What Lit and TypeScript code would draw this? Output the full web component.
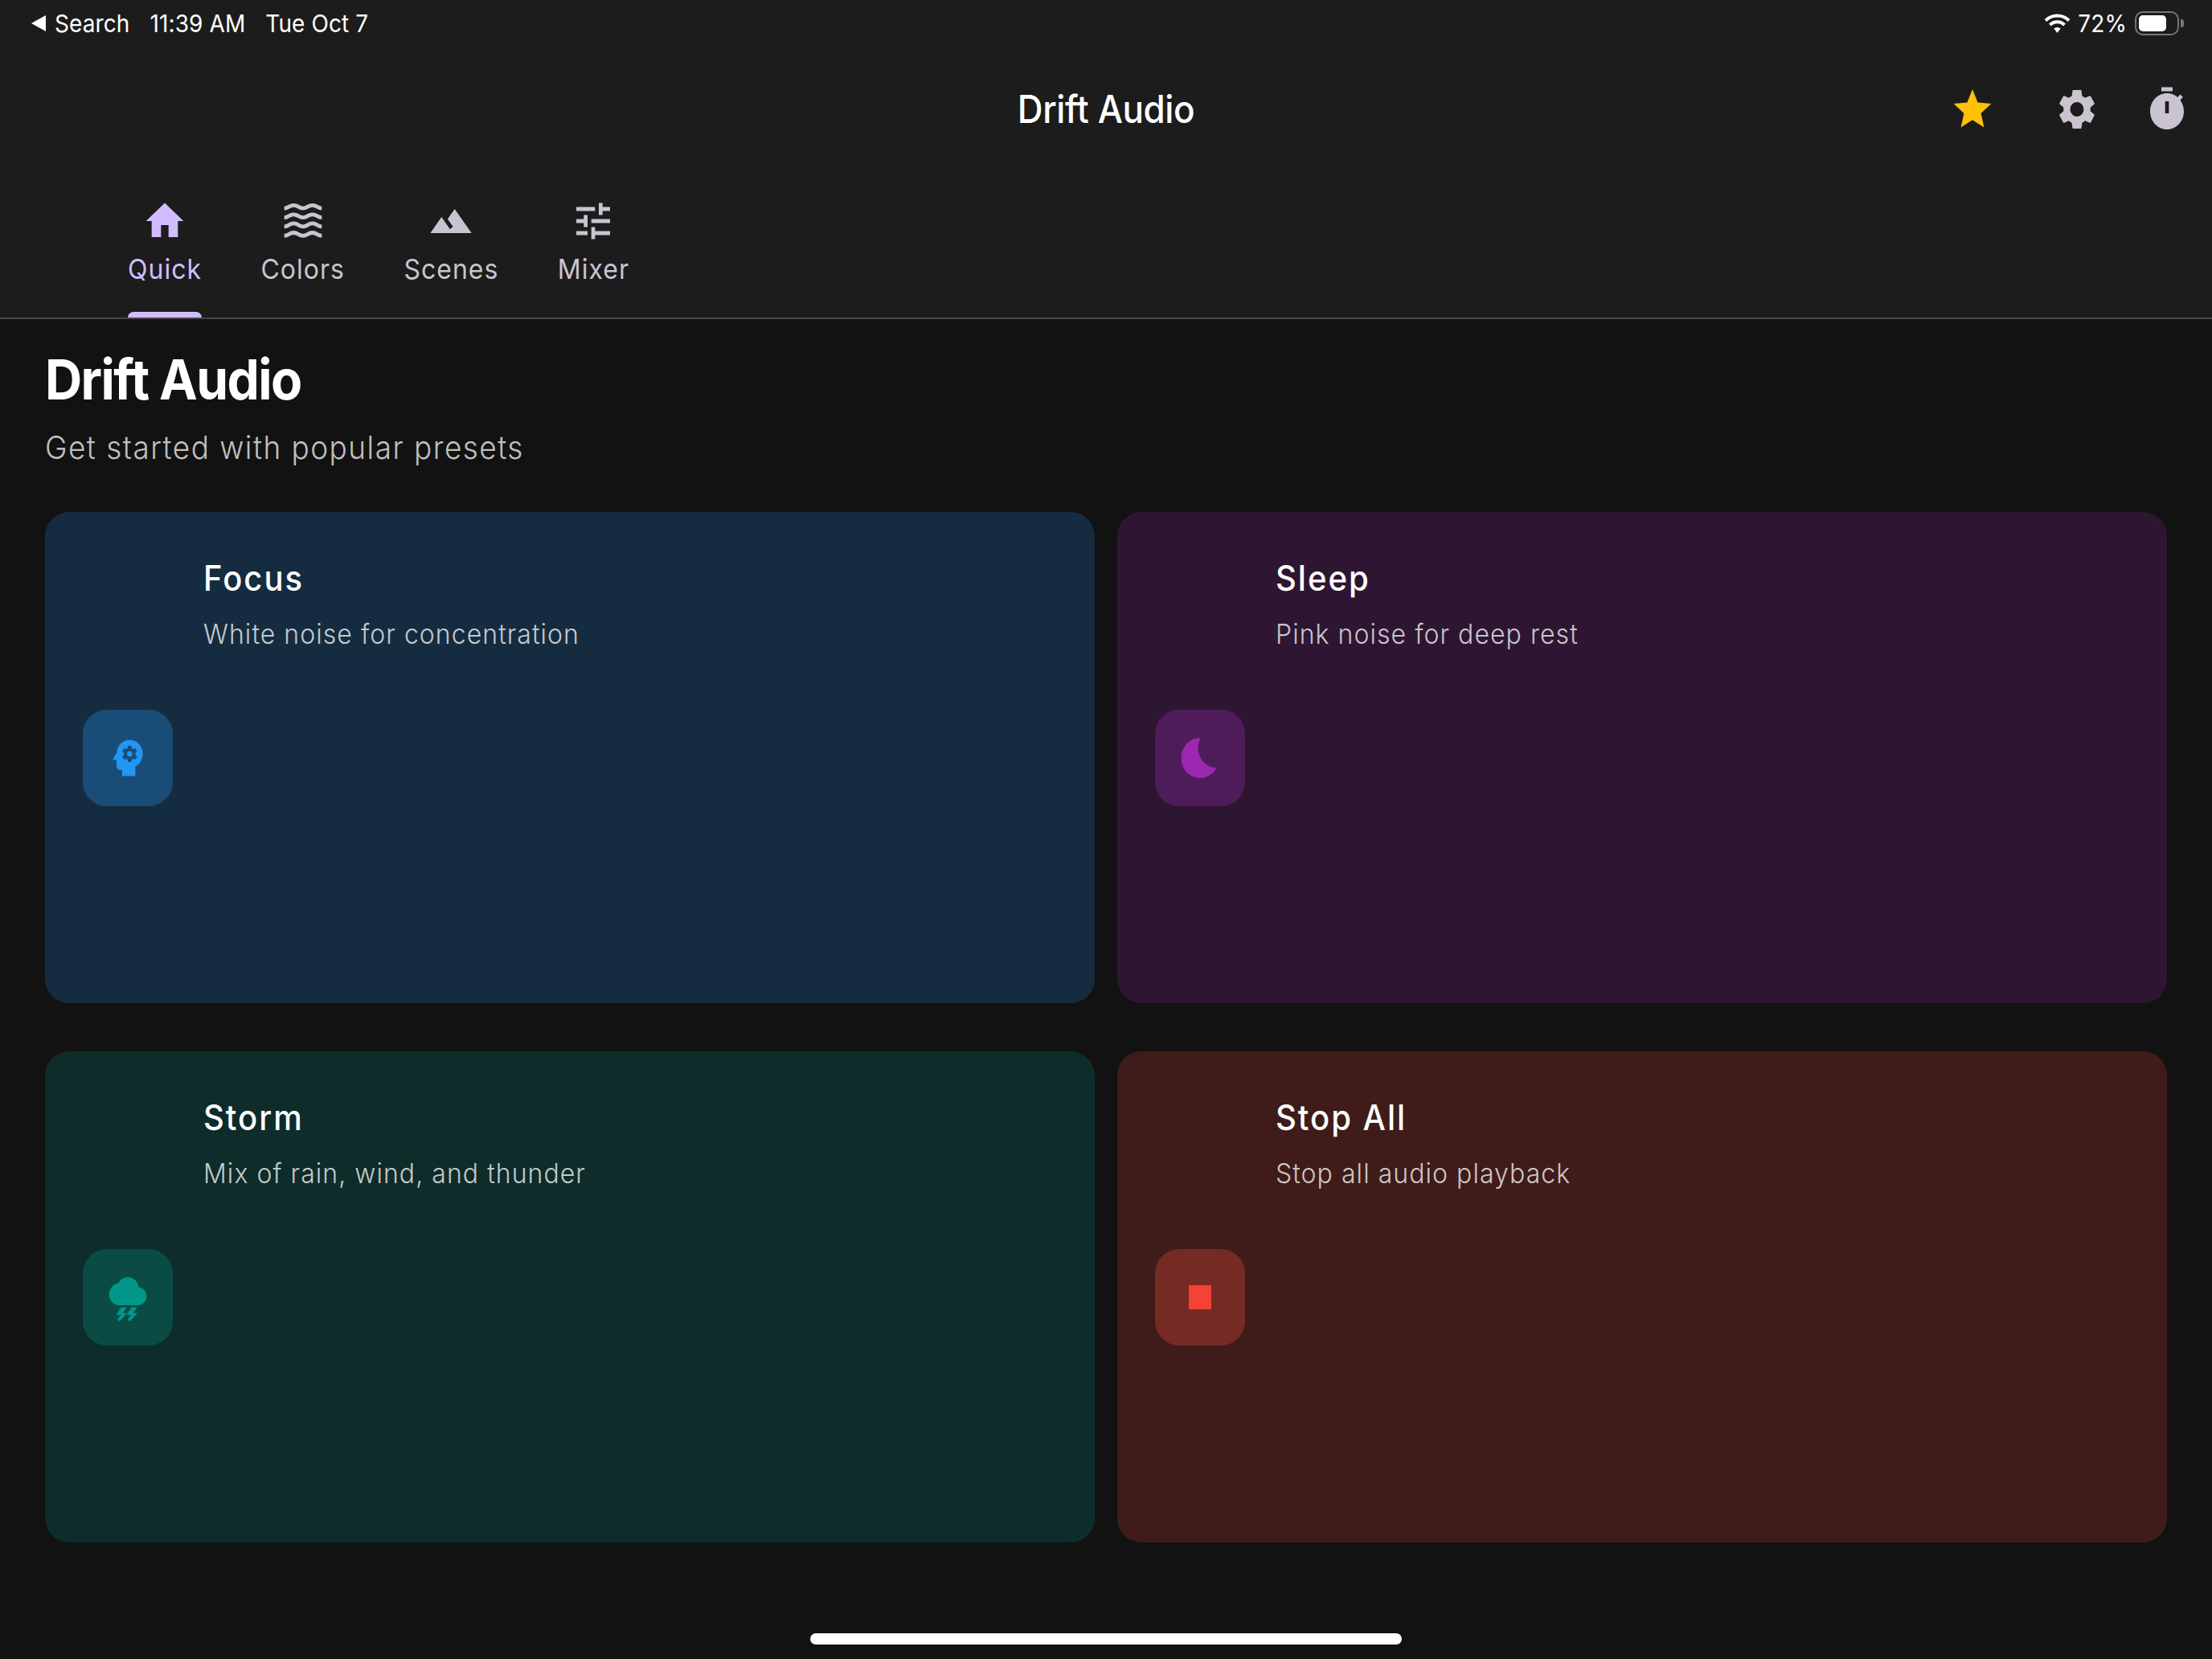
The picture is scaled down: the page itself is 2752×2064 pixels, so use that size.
import { LitElement, html, css, svg } from 'lit';
import { customElement } from 'lit/decorators.js';

const icons = {
  home: svg`<path d="M10 20v-6h4v6h5v-8h3L12 3 2 12h3v8z"/>`,
  waves: svg`<g fill="none" stroke="currentColor" stroke-width="1.9">
    <path d="M2 5.6c2.5 0 2.5-1.5 5-1.5s2.5 1.5 5 1.5 2.5-1.5 5-1.5 2.5 1.5 5 1.5"/>
    <path d="M2 10.2c2.5 0 2.5-1.5 5-1.5s2.5 1.5 5 1.5 2.5-1.5 5-1.5 2.5 1.5 5 1.5"/>
    <path d="M2 14.7c2.5 0 2.5-1.5 5-1.5s2.5 1.5 5 1.5 2.5-1.5 5-1.5 2.5 1.5 5 1.5"/>
    <path d="M2 19.3c2.5 0 2.5-1.5 5-1.5s2.5 1.5 5 1.5 2.5-1.5 5-1.5 2.5 1.5 5 1.5"/>
  </g>`,
  terrain: svg`<path d="M14 6l-3.75 5 2.85 3.8-1.6 1.2C9.81 13.75 7 10 7 10l-6 8h22L14 6z"/>`,
  tune: svg`<path d="M3 17v2h6v-2H3zM3 5v2h10V5H3zm10 16v-2h8v-2h-8v-2h-2v6h2zM7 9v2H3v2h4v2h2V9H7zm14 4v-2H11v2h10zm-6-4h2V7h4V5h-4V3h-2v6z"/>`,
  star: svg`<path d="M12 17.27L18.18 21l-1.64-7.03L22 9.24l-7.19-.61L12 2 9.19 8.63 2 9.24l5.46 4.73L5.82 21z"/>`,
  gear: svg`<path d="M19.14 12.94c.04-.3.06-.61.06-.94 0-.32-.02-.64-.07-.94l2.03-1.58c.18-.14.23-.41.12-.61l-1.92-3.32c-.12-.22-.37-.29-.59-.22l-2.39.96c-.5-.38-1.03-.7-1.62-.94l-.36-2.54c-.04-.24-.24-.41-.48-.41h-3.84c-.24 0-.43.17-.47.41l-.36 2.54c-.59.24-1.13.57-1.62.94l-2.39-.96c-.22-.08-.47 0-.59.22L2.74 8.87c-.12.21-.08.47.12.61l2.03 1.58c-.05.3-.09.63-.09.94s.02.64.07.94l-2.03 1.58c-.18.14-.23.41-.12.61l1.92 3.32c.12.22.37.29.59.22l2.39-.96c.5.38 1.03.7 1.62.94l.36 2.54c.05.24.24.41.48.41h3.84c.24 0 .44-.17.47-.41l.36-2.54c.59-.24 1.13-.56 1.62-.94l2.39.96c.22.08.47 0 .59-.22l1.92-3.32c.12-.22.07-.47-.12-.61l-2.01-1.58zM12 15.6c-1.98 0-3.6-1.62-3.6-3.6s1.62-3.6 3.6-3.6 3.6 1.62 3.6 3.6-1.62 3.6-3.6 3.6z"/>`,
  timer: svg`<path fill-rule="evenodd" d="M9 1h6v2H9zM19.03 7.39l1.42-1.42c-.43-.51-.9-.99-1.41-1.41l-1.42 1.42C16.07 4.74 14.12 4 12 4c-4.97 0-9 4.03-9 9s4.02 9 9 9 9-4.03 9-9c0-2.12-.74-4.07-1.97-5.61zM13 14h-2V8h2v6z"/>`,
  psychology: svg`<path d="M13 8.57c-.79 0-1.43.64-1.43 1.43s.64 1.43 1.43 1.43 1.43-.64 1.43-1.43-.64-1.43-1.43-1.43z"/><path d="M13 3C9.25 3 6.2 5.94 6.02 9.64L4.1 12.2c-.25.33 0 .8.4.8H6v3c0 1.1.9 2 2 2h1v3h7v-4.68c2.36-1.12 4-3.53 4-6.32 0-3.87-3.13-7-7-7zm3 7c0 .13-.01.26-.02.39l.83.66c.08.06.1.16.05.25l-.8 1.39c-.05.09-.16.12-.24.09l-.99-.4c-.21.16-.43.29-.67.39L14 13.83c-.01.1-.1.17-.2.17h-1.6c-.1 0-.18-.07-.2-.17l-.15-1.06c-.25-.1-.47-.23-.68-.39l-.99.4c-.09.03-.2 0-.25-.09l-.8-1.39c-.05-.08-.03-.19.05-.25l.84-.66c-.01-.13-.02-.26-.02-.39s.02-.27.04-.39l-.85-.66c-.08-.06-.1-.16-.05-.26l.8-1.38c.05-.09.15-.12.24-.09l1 .4c.2-.15.43-.29.67-.39L12 6.17c.02-.1.1-.17.2-.17h1.6c.1 0 .18.07.2.17l.15 1.06c.24.1.46.23.67.39l1-.4c.09-.03.2 0 .24.09l.8 1.38c.05.09.03.2-.05.26l-.85.66c.03.12.04.25.04.39z"/>`,
  moon: svg`<path d="M12.34 2.02C6.59 1.82 2 6.42 2 12c0 5.52 4.48 10 10 10 3.71 0 6.93-2.02 8.66-5.02-7.51-.25-12.09-8.43-8.32-14.96z"/>`,
  storm: svg`<path d="M17.92 7.02C17.45 4.18 14.97 2 12 2 9.82 2 7.83 3.18 6.78 5.06 4.09 5.41 2 7.74 2 10.5 2 13.53 4.47 16 7.5 16h10c2.48 0 4.5-2.02 4.5-4.5 0-2.34-1.79-4.27-4.08-4.48z"/><path d="M8.4 17h3L9.5 19.8h2.2L7.6 24l-1.3-.8 2-2.4H5.8zM13.9 17h3L15 19.8h2.2L13.1 24l-1.3-.8 2-2.4h-2.5z"/>`,
  stop: svg`<path d="M6 6h12v12H6z"/>`,
};

const tabs = [
  { label: 'Quick', icon: icons.home, active: true },
  { label: 'Colors', icon: icons.waves, active: false },
  { label: 'Scenes', icon: icons.terrain, active: false },
  { label: 'Mixer', icon: icons.tune, active: false },
];

const presets = [
  { title: 'Focus', desc: 'White noise for concentration', icon: icons.psychology, tone: 'blue' },
  { title: 'Sleep', desc: 'Pink noise for deep rest', icon: icons.moon, tone: 'purple' },
  { title: 'Storm', desc: 'Mix of rain, wind, and thunder', icon: icons.storm, tone: 'green' },
  { title: 'Stop All', desc: 'Stop all audio playback', icon: icons.stop, tone: 'red' },
];

const icon = (body: unknown) =>
  html`<svg class="icon" viewBox="0 0 24 24" preserveAspectRatio="none" fill="currentColor">${body}</svg>`;

@customElement('app-root')
export class AppRoot extends LitElement {
  static styles = css`
    :host {
      display: block;
      width: 2752px;
      height: 2064px;
      overflow: hidden;
      background: #121212;
      color: #fff;
      font-family: Inter, 'Liberation Sans', sans-serif;
    }
    .tall {
      display: inline-block;
      transform: scaleY(1.08);
    }
    .icon {
      display: block;
      flex: none;
      width: 56px;
      height: 60px;
    }

    header {
      background: #1c1c1c;
      border-bottom: 2px solid #49454f;
    }
    .status {
      display: flex;
      align-items: center;
      height: 58px;
      padding: 0 35px 0 39px;
      font-size: 28px;
      line-height: 58px;
      letter-spacing: 0.1px;
    }
    .back {
      width: 18px;
      height: 20px;
      margin-right: 11px;
      fill: #fff;
    }
    .time {
      margin-left: 25px;
    }
    .spacer {
      flex: 1;
    }
    .wifi {
      width: 33px;
      height: 26px;
      margin-right: 9px;
    }
    .battery {
      display: flex;
      align-items: center;
      margin-left: 10px;
    }
    .battery-body {
      box-sizing: border-box;
      width: 55px;
      height: 30px;
      padding: 3px;
      border: 2px solid rgba(255, 255, 255, 0.4);
      border-radius: 10px;
    }
    .battery-fill {
      width: 34px;
      height: 100%;
      background: #fff;
      border-radius: 5px;
    }
    .battery-cap {
      width: 4px;
      height: 10px;
      margin-left: 2px;
      background: rgba(255, 255, 255, 0.4);
      border-radius: 0 3px 3px 0;
    }

    .appbar {
      display: grid;
      grid-template-columns: 1fr auto 1fr;
      align-items: center;
      height: 156px;
    }
    .appbar-title {
      grid-column: 2;
      font-size: 44px;
      line-height: 58px;
      font-weight: 500;
      letter-spacing: -0.4px;
    }
    .actions {
      display: flex;
      justify-content: flex-end;
      gap: 56px;
      padding-right: 28px;
      color: #cac4d0;
    }
    .star {
      margin-right: 18px;
      color: #ffc107;
    }

    .tabs {
      display: flex;
      gap: 73.5px;
      padding: 31px 0 0 159px;
    }
    .tab {
      display: flex;
      flex-direction: column;
      align-items: center;
      color: #cac4d0;
    }
    .tab.active {
      color: #d0bcff;
    }
    .tab-label {
      margin-top: 10px;
      font-size: 32px;
      line-height: 40px;
      letter-spacing: 1px;
    }
    .indicator {
      align-self: stretch;
      height: 7px;
      margin-top: 33px;
      border-radius: 8px 8px 0 0;
    }
    .tab.active .indicator {
      background: #d0bcff;
    }

    main {
      padding: 35px 56px 0;
    }
    h1 {
      margin: 0;
      font-size: 64px;
      line-height: 80px;
      font-weight: 700;
      letter-spacing: -1.6px;
    }
    .sub {
      margin-top: 20px;
      font-size: 37px;
      line-height: 50px;
      font-weight: 300;
      letter-spacing: 1.45px;
      color: #c0c0c0;
    }
    .grid {
      display: grid;
      grid-template-columns: 1fr 1fr;
      grid-auto-rows: 611px;
      gap: 60px 28px;
      margin-top: 55px;
    }
    .card {
      display: flex;
      align-items: center;
      gap: 38px;
      padding-left: 47px;
      border-radius: 30px;
      background: var(--card);
    }
    .badge {
      display: flex;
      align-items: center;
      justify-content: center;
      width: 112px;
      height: 120px;
      border-radius: 30px;
      background: var(--badge);
      color: var(--tone);
    }
    .card-text {
      align-self: flex-start;
      padding-top: 58px;
    }
    .card-title {
      font-size: 40px;
      line-height: 50px;
      font-weight: 500;
      letter-spacing: 2px;
    }
    .card-desc {
      margin-top: 22px;
      font-size: 32px;
      line-height: 44px;
      font-weight: 300;
      letter-spacing: 1.05px;
      color: rgba(255, 255, 255, 0.75);
    }
    .blue {
      --tone: #2196f3;
      --card: #152c40;
      --badge: #194c76;
    }
    .purple {
      --tone: #9c27b0;
      --card: #2e1632;
      --badge: #4f1c5a;
    }
    .green {
      --tone: #009688;
      --card: #0e2c2a;
      --badge: #0a4b43;
    }
    .red {
      --tone: #f44336;
      --card: #3f1c19;
      --badge: #752a24;
    }

    .home-bar {
      width: 736px;
      height: 14px;
      margin: 113px auto 0;
      background: #fff;
      border-radius: 7px;
    }
  `;

  render() {
    return html`
      <header>
        <div class="status">
          <svg class="back" viewBox="0 0 18 20"><path d="M18 0v20L0 10z" /></svg>
          <span class="tall">Search</span>
          <span class="tall time">11:39 AM</span>
          <span class="tall time">Tue Oct 7</span>
          <div class="spacer"></div>
          <svg class="wifi" viewBox="0 0 33 26" fill="none" stroke="#fff" stroke-width="4">
            <path d="M2 9.5a20.5 20.5 0 0 1 29 0" />
            <path d="M7.5 15a12.7 12.7 0 0 1 18 0" />
            <path d="M12.3 19.6a6 6 0 0 1 8.4 0L16.5 25z" fill="#fff" stroke="none" />
          </svg>
          <span class="tall">72%</span>
          <div class="battery">
            <div class="battery-body"><div class="battery-fill"></div></div>
            <div class="battery-cap"></div>
          </div>
        </div>
        <div class="appbar">
          <div class="appbar-title"><span class="tall">Drift Audio</span></div>
          <div class="actions">
            <span class="star">${icon(icons.star)}</span>
            ${icon(icons.gear)} ${icon(icons.timer)}
          </div>
        </div>
        <nav class="tabs">
          ${tabs.map(
            (t) => html`
              <div class="tab ${t.active ? 'active' : ''}">
                ${icon(t.icon)}
                <div class="tab-label"><span class="tall">${t.label}</span></div>
                <div class="indicator"></div>
              </div>
            `
          )}
        </nav>
      </header>
      <main>
        <h1><span class="tall">Drift Audio</span></h1>
        <div class="sub"><span class="tall">Get started with popular presets</span></div>
        <section class="grid">
          ${presets.map(
            (p) => html`
              <article class="card ${p.tone}">
                <div class="badge">${icon(p.icon)}</div>
                <div class="card-text">
                  <div class="card-title"><span class="tall">${p.title}</span></div>
                  <div class="card-desc"><span class="tall">${p.desc}</span></div>
                </div>
              </article>
            `
          )}
        </section>
      </main>
      <div class="home-bar"></div>
    `;
  }
}
